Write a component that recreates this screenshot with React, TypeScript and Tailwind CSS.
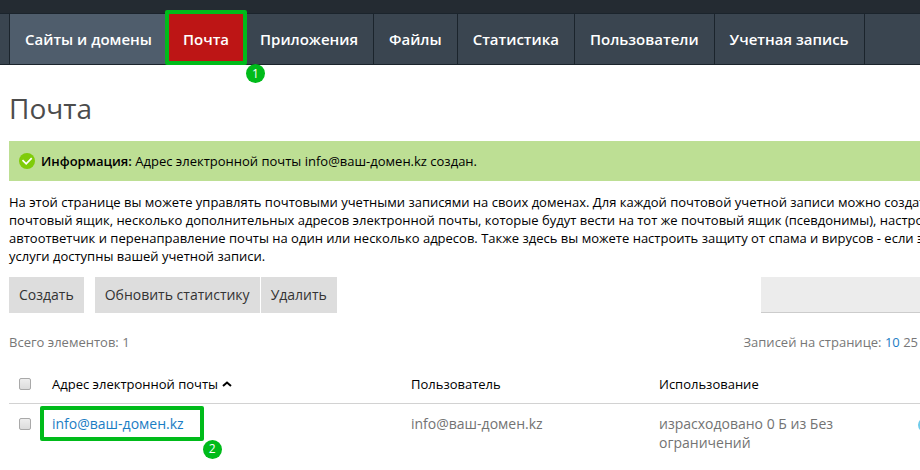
import React from "react";

const tabs = [
  { title: "Сайты и домены", className: "bg-[#4f5d6c]" },
  { title: "Почта", className: "bg-[#bd1515]", step: 1 },
  { title: "Приложения" },
  { title: "Файлы" },
  { title: "Статистика" },
  { title: "Пользователи" },
  { title: "Учетная запись" },
];

const buttonClass = "h-9 bg-[#dddddd] px-[10px] text-sm text-[#333333]";

const checkboxClass =
  "block size-3 appearance-none rounded-[2px] border border-[#a9a9a9] bg-linear-to-b from-[#eeeeee] to-[#dcdcdc]";

// Green frame with a numbered badge on its lower right corner
function Step({ number, className }: { number: number; className: string }) {
  return (
    <span
      className={`pointer-events-none absolute z-10 rounded-[2px] border-4 border-[#00bb1a] ${className}`}
    >
      <span className="absolute top-full left-full mt-[3px] ml-[3px] flex size-[19px] items-center justify-center rounded-full bg-[#00bb1a] text-xs font-normal text-white">
        {number}
      </span>
    </span>
  );
}

function Navigation() {
  return (
    <header className="bg-[#242b32] pt-[13px]">
      <nav className="border-y border-[#1b242c] bg-[#3a4550] pl-[9px]">
        <ul className="flex">
          {tabs.map((tab) => (
            <li
              key={tab.title}
              className={`relative shrink-0 border-l border-[#1b242c] last:border-r ${tab.className ?? ""}`}
            >
              <a
                href="#"
                className="block p-[15px] text-[15px] leading-5 font-semibold text-white"
              >
                {tab.title}
              </a>
              {tab.step && <Step number={tab.step} className="-inset-x-[3px] -top-1 -bottom-px" />}
            </li>
          ))}
        </ul>
      </nav>
    </header>
  );
}

function InfoMessage() {
  return (
    <div className="flex h-10 items-center gap-[6px] bg-[#bddf94] px-[10px]">
      <svg width="16" height="16" viewBox="0 0 16 16" fill="none">
        <circle cx="8" cy="8" r="8" fill="#7fcc09" />
        <path d="M3.5 7.2L7.2 10.9L12.7 5.2" stroke="white" strokeWidth="1.7" />
      </svg>
      <p>
        <b className="font-semibold">Информация:</b> Адрес электронной почты
        info@ваш-домен.kz создан.
      </p>
    </div>
  );
}

function Toolbar() {
  return (
    <div className="mt-3 flex">
      <button type="button" className={buttonClass}>
        Создать
      </button>
      <div className="ml-[11px] flex gap-px">
        <button type="button" className={buttonClass}>
          Обновить статистику
        </button>
        <button type="button" className={buttonClass}>
          Удалить
        </button>
      </div>
      <input
        type="text"
        aria-label="Поиск"
        className="ml-auto h-9 w-[159px] border-b border-[#cccccc] bg-[#ececec] px-2 outline-none"
      />
    </div>
  );
}

function MailTable() {
  return (
    <table className="mt-[14px] w-full table-fixed text-left">
      <colgroup>
        <col className="w-[43px]" />
        <col className="w-[359px]" />
        <col className="w-[248px]" />
        <col className="w-[200px]" />
        <col />
      </colgroup>
      <thead>
        <tr className="h-[38px] border-b border-[#d2d2d2]">
          <th className="pl-[10px]">
            <input type="checkbox" aria-label="Выбрать все" className={checkboxClass} />
          </th>
          <th className="font-normal">
            <a href="#" className="flex items-center gap-1">
              Адрес электронной почты
              <svg width="10" height="6" viewBox="0 0 10 6" fill="none">
                <path d="M1 5L5 1.5L9 5" stroke="black" strokeWidth="2" />
              </svg>
            </a>
          </th>
          <th className="font-normal">Пользователь</th>
          <th className="font-normal">Использование</th>
          <th></th>
        </tr>
      </thead>
      <tbody>
        <tr className="align-top text-sm leading-[19px] text-[#737373]">
          <td className="pt-[14px] pl-[10px]">
            <input type="checkbox" aria-label="Выбрать info@ваш-домен.kz" className={checkboxClass} />
          </td>
          <td className="pt-[10px]">
            <div className="relative w-fit pr-4">
              <a href="#" className="text-[#1b7dc4]">
                info@ваш-домен.kz
              </a>
              <Step number={2} className="-top-2 -right-1 -bottom-2 -left-3" />
            </div>
          </td>
          <td className="pt-[10px]">info@ваш-домен.kz</td>
          <td className="pt-[10px]">израсходовано 0 Б из Без ограничений</td>
          <td className="pt-[14px]">
            <svg width="14" height="14" viewBox="0 0 14 14" className="-mr-3 ml-auto">
              <circle cx="7" cy="7" r="7" fill="#6ecbea" />
            </svg>
          </td>
        </tr>
      </tbody>
    </table>
  );
}

export default function App() {
  return (
    <div className="min-h-screen overflow-hidden bg-white font-['Open_Sans',sans-serif] text-[13px] leading-[18px] text-black">
      <Navigation />
      <main className="pt-[23px] pl-[9px]">
        <h1 className="mb-[13px] text-[28px] leading-10 text-[#4c4c4c]">Почта</h1>
        <InfoMessage />
        <p className="mt-3 whitespace-nowrap">
          На этой странице вы можете управлять почтовыми учетными записями на своих доменах. Для каждой почтовой учетной записи можно создать
          <br />
          почтовый ящик, несколько дополнительных адресов электронной почты, которые будут вести на тот же почтовый ящик (псевдонимы), настроить
          <br />
          автоответчик и перенаправление почты на один или несколько адресов. Также здесь вы можете настроить защиту от спама и вирусов - если эти
          <br />
          услуги доступны вашей учетной записи.
        </p>
        <Toolbar />
        <div className="mt-5 flex justify-between pr-[2px] text-[#777777]">
          <span>Всего элементов: 1</span>
          <span>
            Записей на странице: <a href="#" className="text-[#1b7dc4]">10</a> 25
          </span>
        </div>
        <MailTable />
      </main>
    </div>
  );
}
